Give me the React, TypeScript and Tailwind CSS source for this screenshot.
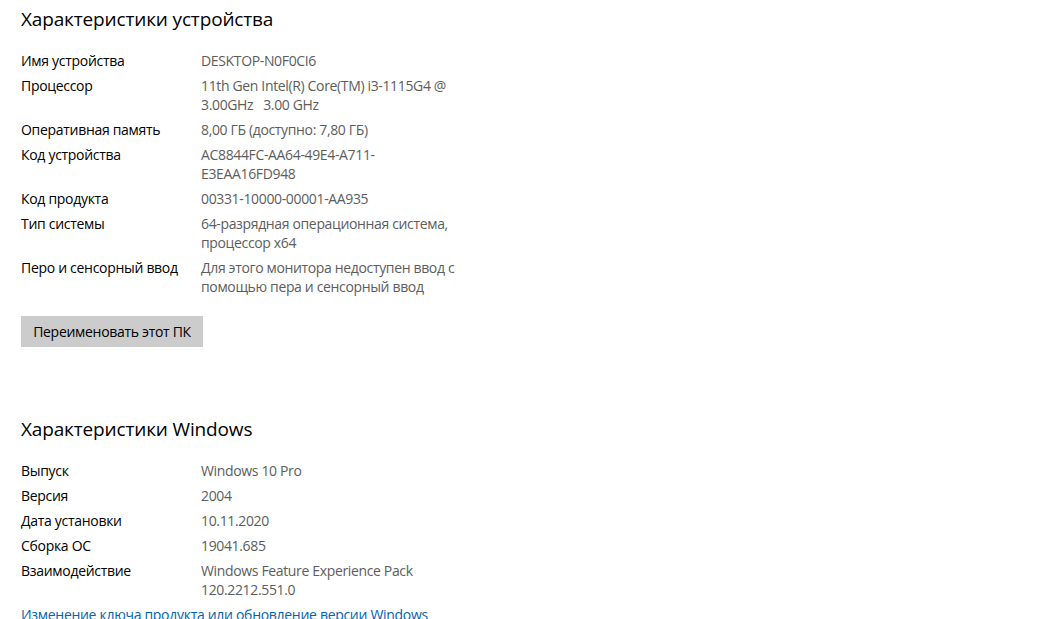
import React from "react";

const font = { fontFamily: '"Open Sans", "Noto Sans", sans-serif' };

type Row = { label: string; value: string[] };

const device: Row[] = [
  { label: "Имя устройства", value: ["DESKTOP-N0F0CI6"] },
  { label: "Процессор", value: ["11th Gen Intel(R) Core(TM) i3-1115G4 @", "3.00GHz   3.00 GHz"] },
  { label: "Оперативная память", value: ["8,00 ГБ (доступно: 7,80 ГБ)"] },
  { label: "Код устройства", value: ["AC8844FC-AA64-49E4-A711-", "E3EAA16FD948"] },
  { label: "Код продукта", value: ["00331-10000-00001-AA935"] },
  { label: "Тип системы", value: ["64-разрядная операционная система,", "процессор x64"] },
  { label: "Перо и сенсорный ввод", value: ["Для этого монитора недоступен ввод с", "помощью пера и сенсорный ввод"] },
];

const windows: Row[] = [
  { label: "Выпуск", value: ["Windows 10 Pro"] },
  { label: "Версия", value: ["2004"] },
  { label: "Дата установки", value: ["10.11.2020"] },
  { label: "Сборка ОС", value: ["19041.685"] },
  { label: "Взаимодействие", value: ["Windows Feature Experience Pack", "120.2212.551.0"] },
];

function Rows({ rows }: { rows: Row[] }) {
  return (
    <div className="flex flex-col">
      {rows.map((r) => (
        <div key={r.label} className="flex text-[14px] leading-[19px] tracking-[-0.3px] mb-[6px]">
          <div className="w-[180px] shrink-0 text-black">{r.label}</div>
          <div className="text-[#5d5d5d] whitespace-pre tracking-[-0.35px]">
            {r.value.map((v) => (
              <div key={v}>{v}</div>
            ))}
          </div>
        </div>
      ))}
    </div>
  );
}

export default function App() {
  return (
    <div className="bg-white min-h-[619px] pl-[21px] pt-[5px] overflow-hidden" style={font}>
      <h1 className="text-[19px] leading-[28px] tracking-[-0.15px] text-black mb-[18px]">Характеристики устройства</h1>
      <Rows rows={device} />
      <button className="mt-[14px] h-[31px] w-[182px] bg-[#cccccc] text-[14px] tracking-[-0.3px] text-black">
        Переименовать этот ПК
      </button>
      <h1 className="mt-[68px] text-[19px] leading-[28px] tracking-[-0.15px] text-black mb-[18px]">Характеристики Windows</h1>
      <Rows rows={windows} />
      <a className="block text-[14px] leading-[19px] tracking-[-0.3px] text-[#0063b1]">
        Изменение ключа продукта или обновление версии Windows
      </a>
    </div>
  );
}
